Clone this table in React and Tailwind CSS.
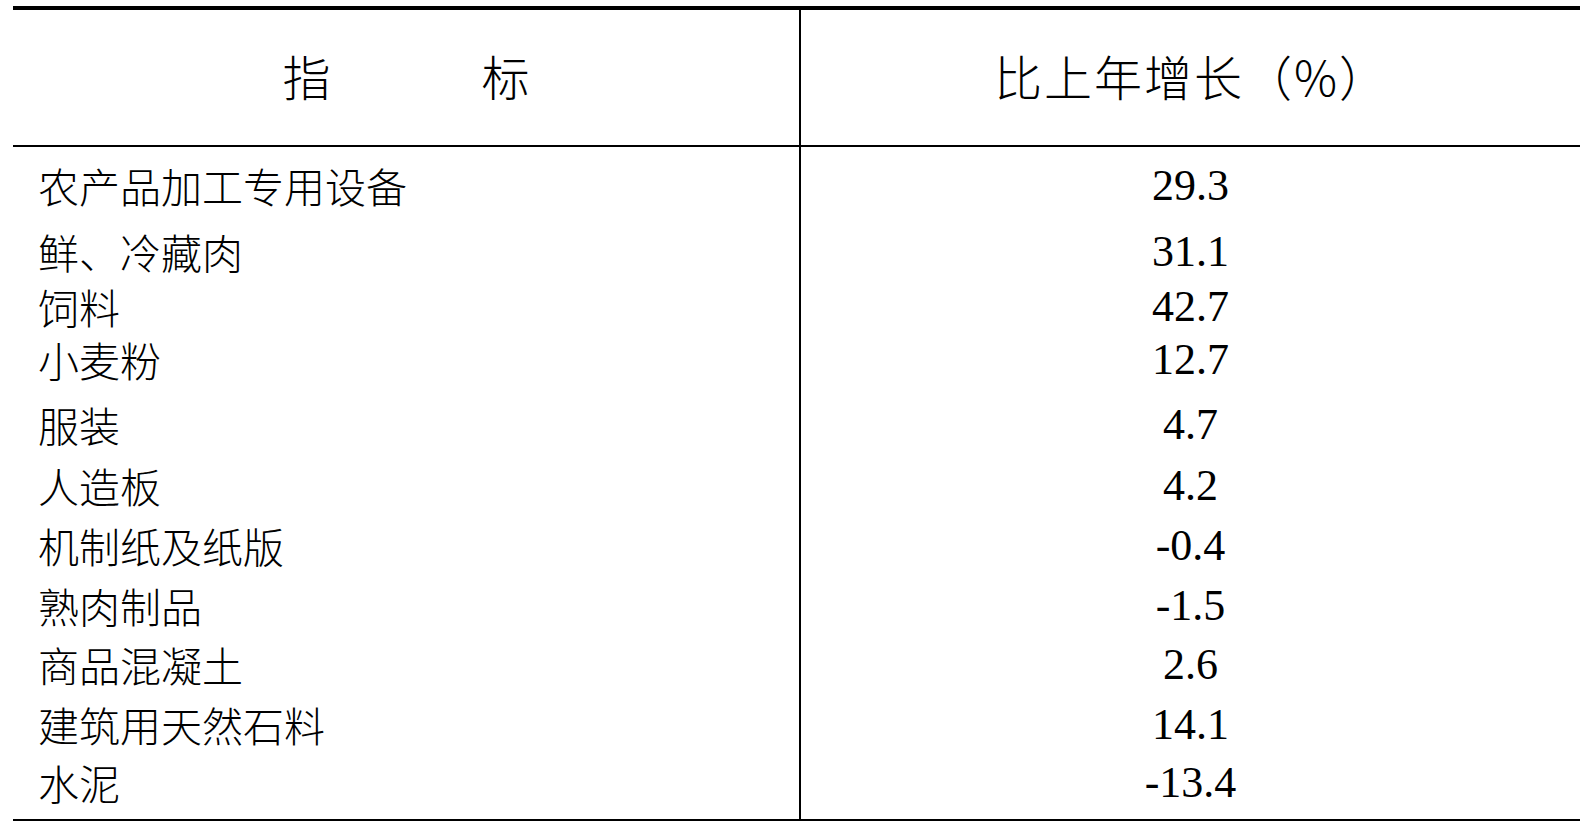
import React from "react";

const rows = [
  { label: "农产品加工专用设备", value: "29.3", h: 66 },
  { label: "鲜、冷藏肉", value: "31.1", h: 55 },
  { label: "饲料", value: "42.7", h: 53 },
  { label: "小麦粉", value: "12.7", h: 65 },
  { label: "服装", value: "4.7", h: 61 },
  { label: "人造板", value: "4.2", h: 60 },
  { label: "机制纸及纸版", value: "-0.4", h: 60 },
  { label: "熟肉制品", value: "-1.5", h: 59 },
  { label: "商品混凝土", value: "2.6", h: 60 },
  { label: "建筑用天然石料", value: "14.1", h: 58 },
  { label: "水泥", value: "-13.4", h: 56 },
];

const cjk = { fontFamily: '"Noto Sans CJK SC", "Noto Sans", sans-serif' };
const serif = { fontFamily: '"Liberation Serif", "Noto Sans CJK SC", serif' };

export default function App() {
  return (
    <div className="w-[1582px] h-[821px] bg-white pt-[6px] pl-[13px] overflow-hidden">
      <div className="w-[1567px] border-t-4 border-b-2 border-black text-black">
        {/* header */}
        <div className="flex h-[137px] border-b-2 border-black">
          <div className="w-[786px] flex items-center justify-center gap-[151px] pb-[6px] text-[48px] leading-none font-light" style={cjk}>
            <span>指</span>
            <span>标</span>
          </div>
          <div className="flex-1 border-l-2 border-black flex items-center justify-center pb-[6px] text-[48px] leading-none font-light" style={cjk}>
            <span className="tracking-[2px] -mr-[2px]">比上年增长（%）</span>
          </div>
        </div>
        {/* body */}
        <div className="flex">
          <div className="w-[786px] pt-[18px]">
            {rows.map((r) => (
              <div key={r.label} className="pl-[25px]" style={{ height: r.h }}>
                <div className="text-[41px] leading-[40px] font-light whitespace-nowrap" style={cjk}>
                  {r.label}
                </div>
              </div>
            ))}
          </div>
          <div className="flex-1 border-l-2 border-black pt-[19px]">
            {rows.map((r) => (
              <div key={r.label} className="flex justify-center" style={{ height: r.h }}>
                <div className="text-[44px] leading-[40px]" style={serif}>
                  {r.value}
                </div>
              </div>
            ))}
          </div>
        </div>
      </div>
    </div>
  );
}
